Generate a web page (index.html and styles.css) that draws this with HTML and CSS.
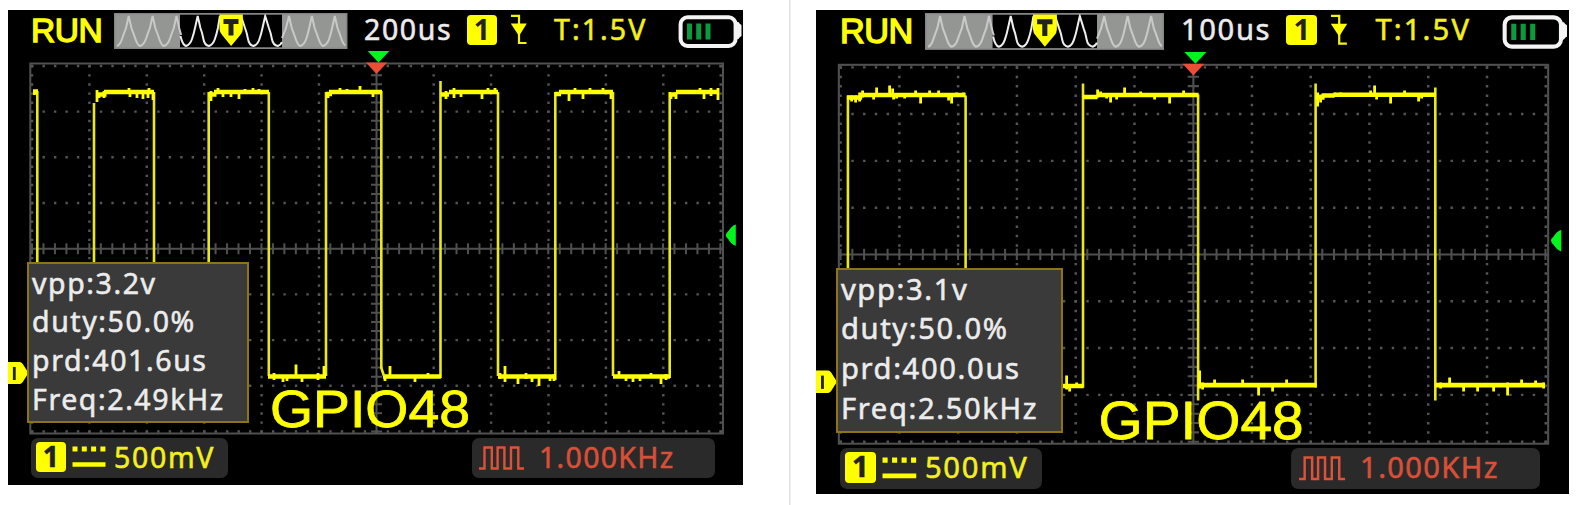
FILE: index.html
```html
<!DOCTYPE html>
<html lang="en">
<head>
<meta charset="utf-8">
<title>Oscilloscope GPIO48</title>
<link rel="stylesheet" href="styles.css">
</head>
<body>
<svg class="defs" width="0" height="0" aria-hidden="true">
  <defs>
    <g id="graticule">
      <path class="dots" stroke-dasharray="2.400 9.073" d="M31 66H723M31 111.6H723M31 157.3H723M31 203H723M31 294.4H723M31 340.1H723M31 385.8H723M31 431.5H723"/>
      <path class="dots" stroke-dasharray="2.400 6.740" d="M32 65V433M89.4 65V433M146.8 65V433M204.2 65V433M261.6 65V433M319 65V433M433.7 65V433M491.1 65V433M548.5 65V433M605.9 65V433M663.3 65V433M720.7 65V433"/>
      <path class="axis" d="M30 248.7H723M376.5 64V433"/>
      <path class="ticks" stroke-dasharray="2 9.473" d="M31 248.7H723"/>
      <path class="ticks" stroke-dasharray="2 7.14" d="M376.5 65V433"/>
      <rect class="axis" x="30.3" y="63.5" width="692.7" height="370"/>
    </g>
    <g id="markers">
      <path fill="#00f51c" d="M367.7 51h21.6L378.500 62.500z"/>
      <path fill="#ea4f35" d="M366 62.500h21.200L376.500 74z"/>
      <path fill="#00f51c" d="M735.800 224.500v21.200q-4-1-7.500-6.500q-2.500-2-2.500-4t2.500-4q3.500-5.500 7.500-6.700z"/>
      <path fill="#ff0" d="M8 362h11.500q2.500 0 4.500 4l4.500 7-4.500 7q-2 4-4.500 4H8z"/>
      <path stroke="#222" stroke-width="2.800" d="M14.300 367v13"/>
    </g>
    <symbol id="preview" viewBox="114 13 233.500 36">
      <rect x="114" y="13" width="233.500" height="36" fill="#949694"/>
      <rect x="180" y="14.500" width="102" height="33" fill="#000"/>
      <path class="pwave" d="M117 46q3-1 5-7t4-11l2.700-12 2.700 12q2 5 4 11t4.500 7q4-1 6-7t4-11l2.700-12 2.700 12q2 5 4 11t4.500 7q4-1 6-7t4-11l2.700-12 2.700 12q1 4 2 7"/>
      <path class="pwave lit" d="M180.500 36q2 9 5.500 10 4-1 6-7t3-11l2.700-12 2.700 12q2 5 3 11t5.500 7q4-1 6-7t3-11l2-12M241 16l4 12q2 5 3 11t5.500 7q4-1 6-7t3-11l2.700-12 3.700 12q2 5 3 11t6 7q3-1 4-4"/>
      <path class="pwave" d="M282 38q2-5 4-10l3-12 2.700 12q2 5 4 11t4.500 7q4-1 6-7t3-11l2.700-12 2.700 12q2 5 4 11t4.500 7q4-1 6-7t3-11l2.700-12 2.700 12q2 5 4 11t4 6"/>
      <rect x="114.700" y="13.700" width="232.100" height="34.600" fill="none" stroke="#858585" stroke-width="1.400"/>
      <path fill="#ff0" d="M219.500 14.500h23.300v14.500q0 3-2.500 6l-9.200 11-9-11q-2.600-3-2.600-6z"/>
      <path fill="#222" d="M223.500 19h15v5h-5v11.500h-5V24h-5z"/>
    </symbol>
    <symbol id="falling" viewBox="510 13 18 32">
      <path fill="none" stroke="#f4f410" stroke-width="2.200" d="M511 15.800h8V43h7.500"/>
      <path fill="#ff0" d="M510.800 23.500h16L519 36z"/>
    </symbol>
    <symbol id="battery" viewBox="678 14 65 35">
      <rect x="680.600" y="17.300" width="55" height="28.600" rx="7" fill="none" stroke="#f4f4f4" stroke-width="4"/>
      <path fill="#f4f4f4" d="M736 22h2.500q1 2 3 3v11q-2 1-3 3H736z"/>
      <path stroke="#0a9b3e" stroke-width="5" d="M689.500 23.500v16M698.700 23.500v16M708 23.500v16"/>
    </symbol>
    <symbol id="dc" viewBox="72 446 34 22">
      <path stroke="#ff0" stroke-width="5" stroke-dasharray="5 4.300" d="M72.500 449h33"/>
      <path stroke="#ff0" stroke-width="4.600" d="M72.500 464.500h33"/>
    </symbol>
    <symbol id="pulses" viewBox="478 445 47 26">
      <path fill="none" stroke="#df5138" stroke-width="2.400" d="M479 468.500h5.500V447.500h7.300v21h5.800V447.500h6.800v21h6.600V447.500h7.300v21h5.700"/>
    </symbol>
  </defs>
</svg>

<main class="board">
  <section class="scope scope-a">
    <header class="top">
      <span class="run">RUN</span>
      <svg class="preview"><use href="#preview"/></svg>
      <span class="timebase">200us</span>
      <span class="chan">1</span>
      <svg class="edge"><use href="#falling"/></svg>
      <span class="level">T:1.5V</span>
      <svg class="battery"><use href="#battery"/></svg>
    </header>
    <div class="plot">
      <svg class="screen" viewBox="8 50 735 388">
        <use href="#graticule"/>
        <path class="rise" d="M37.300 91V376M94 103V376M154 92V376M208.700 92V376M268.800 92V376M326 92V376M381.300 91V368M440.500 81V378M498 92V376M555.300 92V380M613 92V376M669.700 92V378"/>
        <path class="level-line" d="M33 91.500h5M96.500 94.500h10M104 92H154M208.500 94.500h8M214 92H269M326 94h6M329 92H382M441 94.500h8M449 92H498M555 94h6M559 92H613M669 94.500h8M676 92h42M268 376.500H326M383 376.500H441M498 376.500H556M613 376.500H670"/>
        <path class="noise" d="M34.500 90v5M97 90v12M104 91v7M99 96v2M129 88v5M149 88v4M130 92v5M137 92v6M143 92v7M148 92v6M153 92v8M211 91v10M218 88v4M223 92v5M231 92v5M239 92v7M245 89v3M253 88v4M259 89v3M328 92v6M340 88v4M347 89v3M360 86v6M373 91v6M446 91v8M454 88v10M461 92v5M482 92v7M488 88v4M495 88v4M565 90v3M569 92v9M575 88v4M583 92v7M590 88v4M603 88v4M611 92v7M671 93v6M676 92v7M700 88v4M704 92v7M711 88v8M718 88v12M274 373v7M283 377v5M287 377v4M296 364.500v12M302 377v5M318 373v7M324 366v10M390 366v12M385 375v6M415 377v5M428 373v4M500 373v6M505 366v16M518 377v7M526 373v6M532 377v5M539 377v9M550 377v4M554 374v7M619 371v6M626 377v4M633 377v5M640 377v4M651 373v5M661 377v7M666 374v6"/>
        <path class="rise" d="M381 367l3 9"/>
        <use href="#markers"/>
        <text class="caption" x="270" y="427" textLength="200" lengthAdjust="spacingAndGlyphs">GPIO48</text>
      </svg>
      <div class="readout">
        <span>vpp:3.2v</span>
        <span>duty:50.0%</span>
        <span>prd:401.6us</span>
        <span>Freq:2.49kHz</span>
      </div>
    </div>
    <footer class="bottom">
      <div class="pill volts">
        <span class="chan">1</span>
        <svg class="dc"><use href="#dc"/></svg>
        <span>500mV</span>
      </div>
      <div class="pill freq">
        <svg class="pulses"><use href="#pulses"/></svg>
        <span>1.000KHz</span>
      </div>
    </footer>
  </section>

  <section class="scope scope-b">
    <header class="top">
      <span class="run">RUN</span>
      <svg class="preview"><use href="#preview"/></svg>
      <span class="timebase">100us</span>
      <span class="chan">1</span>
      <svg class="edge"><use href="#falling"/></svg>
      <span class="level">T:1.5V</span>
      <svg class="battery"><use href="#battery"/></svg>
    </header>
    <div class="plot">
      <svg class="screen" viewBox="816.400 50.540 752.600 397.300">
        <use href="#graticule" transform="translate(808.200 -.66) scale(1.024)"/>
        <path class="rise" d="M848.300 95V385M966 95V385M1083.400 83V387M1198.500 94V400M1316 83V387M1435.700 87V400"/>
        <path class="level-line" d="M847.500 97h15M860 94.500H966M1083 96.500h15M1098 94.500H1199M1316 97h9M1322 95h13M1335 94.300H1436M1063 385.500H1084M1198 384.700H1317M1436 384.700H1545"/>
        <path class="noise" d="M852 95v6M856 95v7M860 92v9M863 90v7M877 87v8M874 94v5M890 85v9M893 88v6M894 94v5M897 94v4M905 94v4M916 90v6M921 94v9M930 90v5M939 90v5M949 94v6M952 94v9M957 92v3M964 92v3M1098 89v8M1101 91v5M1107 94v4M1111 94v8M1117 94v5M1125 87v8M1141 91v3M1155 94v5M1170 94v9M1184 90v4M1318 92v14M1321 94v8M1335 92v3M1341 92v3M1371 90v4M1375 85v9M1377 94v5M1391 94v9M1405 90v5M1419 94v7M1422 94v4M1067 375v14M1070 384v7M1077 382v5M1200 370v18M1203 382v7M1215 379v6M1243 379v6M1259 385v10M1273 385v6M1287 379v6M1441 382v6M1450 377v8M1464 385v6M1478 385v6M1494 385v6M1508 382v13M1522 379v6M1536 380v5M1544 382v6"/>
        <use href="#markers" transform="translate(808.200 -.66) scale(1.024)"/>
        <text class="caption" x="1099" y="439" textLength="205" lengthAdjust="spacingAndGlyphs">GPIO48</text>
      </svg>
      <div class="readout">
        <span>vpp:3.1v</span>
        <span>duty:50.0%</span>
        <span>prd:400.0us</span>
        <span>Freq:2.50kHz</span>
      </div>
    </div>
    <footer class="bottom">
      <div class="pill volts">
        <span class="chan">1</span>
        <svg class="dc"><use href="#dc"/></svg>
        <span>500mV</span>
      </div>
      <div class="pill freq">
        <svg class="pulses"><use href="#pulses"/></svg>
        <span>1.000KHz</span>
      </div>
    </footer>
  </section>
</main>
</body>
</html>
```

FILE: styles.css
```css
* { box-sizing: border-box; }
body { margin: 0; background: #fff; }
.defs { position: absolute; }

.board {
  display: grid;
  grid-template-columns: 790px 795px;
  height: 505px;
  overflow: hidden;
  background: linear-gradient(#e0e0e0, #e0e0e0) 788.500px 0 / 1.500px 100% no-repeat;
}

/* --u is the size of one screen unit; the second capture is slightly larger */
.scope {
  --u: 1px;
  display: flex;
  flex-direction: column;
  width: calc(734.500 * var(--u));
  margin: 10px 0 0 8px;
  background: #000;
  overflow: hidden;
  font: calc(28.5 * var(--u)) / 1 "Noto Sans", "Open Sans", sans-serif;
  color: #ececec;
  white-space: nowrap;
}
.scope-a { height: 475px; }
.scope-b { --u: 1.024px; height: 484px; margin-left: 26.400px; }

svg { display: block; flex: none; }

.top {
  display: flex;
  flex: none;
  align-items: flex-start;
  height: calc(40 * var(--u));
  padding-left: calc(23 * var(--u));
}
.run {
  flex: none;
  width: calc(83 * var(--u));
  padding-top: calc(4 * var(--u));
  font: calc(33.5 * var(--u)) / 1 "Liberation Sans", Arial, sans-serif;
  letter-spacing: calc(-.5 * var(--u));
  color: #ff0;
  -webkit-text-stroke: 1.400px #ff0;
}
.preview { width: calc(233.500 * var(--u)); height: calc(36 * var(--u)); margin-top: calc(3 * var(--u)); }
.timebase, .level, .pill, .readout { -webkit-text-stroke: .55px currentColor; }
.timebase {
  flex: none;
  width: calc(119.500 * var(--u));
  padding: calc(4.500 * var(--u)) 0 0 calc(16.500 * var(--u));
  letter-spacing: calc(1.600 * var(--u));
}
.chan {
  flex: none;
  width: calc(30 * var(--u));
  height: calc(30 * var(--u));
  border-radius: calc(4 * var(--u));
  background: #ff0;
  color: #222;
  text-align: center;
  font-weight: 700;
  line-height: calc(29 * var(--u));
}
.top .chan { margin: calc(4.500 * var(--u)) calc(13 * var(--u)) 0 0; }
.edge { width: calc(18 * var(--u)); height: calc(32 * var(--u)); margin-top: calc(3 * var(--u)); }
.level {
  flex: none;
  width: calc(150 * var(--u));
  padding: calc(4.500 * var(--u)) 0 0 calc(26 * var(--u));
  letter-spacing: calc(2.100 * var(--u));
  color: #f4f01e;
}
.battery { width: calc(65 * var(--u)); height: calc(35 * var(--u)); margin-top: calc(4 * var(--u)); }

.plot { position: relative; flex: none; width: calc(735 * var(--u)); height: calc(388 * var(--u)); }
.screen { width: 100%; height: 100%; overflow: visible; }
.dots { fill: none; stroke: #555; stroke-width: 2.400; }
.axis { fill: none; stroke: #505050; stroke-width: 2; }
.ticks { fill: none; stroke: #505050; stroke-width: 11; }
.rise { fill: none; stroke: #e8e81a; stroke-width: 2.600; }
.level-line { fill: none; stroke: #ff0; stroke-width: 4.600; }
.noise { fill: none; stroke: #ff0; stroke-width: 2.800; }
.pwave { fill: none; stroke: #c9c9c9; stroke-width: 2; }
.lit { stroke: #eee; }
.caption {
  font: 52.500px "Liberation Sans", Arial, sans-serif;
  fill: #ff0;
  stroke: #ff0;
  stroke-width: .8;
}
.scope-b .caption { font-size: 53.800px; }

/* Measurement panel floats over the trace */
.readout {
  position: absolute;
  left: calc(19 * var(--u));
  top: calc(211.500 * var(--u));
  width: calc(222 * var(--u));
  height: calc(161.500 * var(--u));
  display: flex;
  flex-direction: column;
  padding: 0 0 0 calc(3 * var(--u));
  background: #3a3a3a;
  border: 2px solid #8f7413;
  line-height: calc(38.900 * var(--u));
  letter-spacing: calc(1.600 * var(--u));
}

.bottom {
  display: flex;
  flex: none;
  justify-content: space-between;
  padding: 0 calc(28 * var(--u)) 0 calc(23 * var(--u));
}
.pill {
  display: flex;
  align-items: center;
  height: calc(40 * var(--u));
  padding-bottom: calc(1.500 * var(--u));
  border-radius: calc(7 * var(--u));
  background: #2a2a2a;
  letter-spacing: calc(1.300 * var(--u));
}
.volts { width: calc(197 * var(--u)); padding-left: calc(5 * var(--u)); color: #f4f01e; letter-spacing: calc(1.700 * var(--u)); }
.volts .chan { margin-top: calc(-1 * var(--u)); letter-spacing: 0; }
.dc { width: calc(34 * var(--u)); height: calc(22 * var(--u)); margin: 0 calc(8 * var(--u)) 0 calc(6 * var(--u)); }
.freq { width: calc(243 * var(--u)); padding-left: calc(6.500 * var(--u)); color: #d94f37; }
.pulses { width: calc(47 * var(--u)); height: calc(26 * var(--u)); margin: calc(1 * var(--u)) calc(14 * var(--u)) 0 0; }
```
